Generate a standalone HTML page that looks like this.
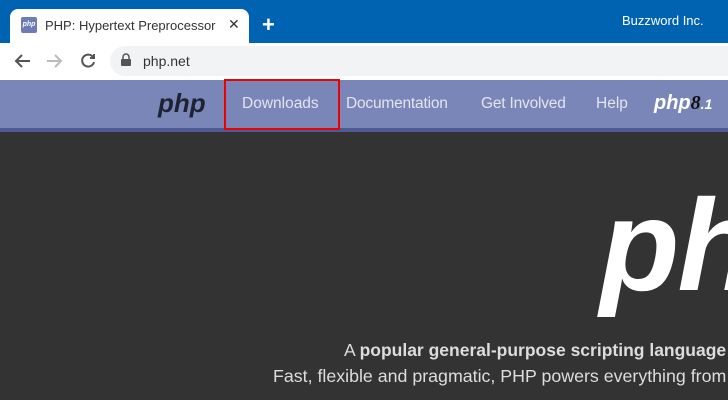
<!DOCTYPE html>
<html><head><style>
*{margin:0;padding:0;box-sizing:border-box}
body{width:728px;height:400px;overflow:hidden;font-family:"Liberation Sans",sans-serif;background:#333;position:relative}
.abs{position:absolute}
</style></head><body>
<div class="abs" style="left:0;top:0;width:728px;height:43px;background:#0063b1"></div>
<div class="abs" style="left:10px;top:9px;width:239px;height:35px;background:#fff;border-radius:8px 8px 0 0"></div>
<div class="abs" style="left:21px;top:17px;width:16px;height:16px;background:#6f7bb5;border-radius:2px;color:#fff;font-size:7px;font-style:italic;font-weight:bold;line-height:16px;text-align:center">php</div>
<div class="abs" style="left:45px;top:18px;font-size:13px;color:#333">PHP: Hypertext Preprocessor</div>
<div class="abs" style="left:228px;top:16px;font-size:14px;color:#333">✕</div>
<div class="abs" style="left:262px;top:12px;font-size:22px;color:#fff;font-weight:bold">+</div>
<div class="abs" style="left:622px;top:13px;font-size:13px;color:#fff">Buzzword Inc.</div>
<div class="abs" style="left:0;top:43px;width:728px;height:37px;background:#fff"></div>
<svg class="abs" style="left:0;top:43px" width="110" height="37"><g fill="none" stroke-width="2"><path d="M30 18H16M22 12l-6 6 6 6" stroke="#555"/><path d="M47 18h14M55 12l6 6-6 6" stroke="#bbb"/><path d="M93 14a6 6 0 1 0 1 5M94 11v4h-4" stroke="#555"/></g></svg>
<div class="abs" style="left:110px;top:46px;width:618px;height:30px;background:#f1f3f4;border-radius:15px 0 0 15px"></div>
<svg class="abs" style="left:120px;top:53px" width="12" height="14"><path d="M3 6V4a3 3 0 0 1 6 0v2" stroke="#555" stroke-width="1.5" fill="none"/><rect x="1" y="6" width="10" height="7" rx="1" fill="#555"/></svg>
<div class="abs" style="left:143px;top:53px;font-size:14px;color:#333">php.net</div>
<div class="abs" style="left:0;top:80px;width:728px;height:48px;background:#7a86b8"></div>
<div class="abs" style="left:0;top:128px;width:728px;height:4px;background:#4f5b93"></div>
<div class="abs" style="left:158px;top:88px;font-size:26px;font-style:italic;font-weight:bold;color:#1f2233">php</div>
<div class="abs" style="left:242px;top:95px;font-size:15.5px;color:#e2e4ef">Downloads</div>
<div class="abs" style="left:346px;top:95px;font-size:15.5px;color:#e2e4ef;letter-spacing:-0.2px">Documentation</div>
<div class="abs" style="left:481px;top:95px;font-size:15.5px;color:#e2e4ef;letter-spacing:-0.2px">Get Involved</div>
<div class="abs" style="left:596px;top:95px;font-size:15.5px;color:#e2e4ef">Help</div>
<div class="abs" style="left:654px;top:92px;font-size:20px;font-style:italic;font-weight:bold;color:#fff">php<span style="color:#111;font-family:'Liberation Serif',serif">8</span><span style="font-size:14px">.1</span></div>
<div class="abs" style="left:224px;top:79px;width:116px;height:51px;border:2px solid #e00"></div>
<div class="abs" style="left:600px;top:180px;font-size:130px;font-style:italic;font-weight:bold;color:#fff;line-height:1;letter-spacing:-2px">php</div>
<div class="abs" style="left:344px;top:340px;font-size:17.5px;color:#ddd;white-space:nowrap">A <b>popular general-purpose scripting language that</b></div>
<div class="abs" style="left:273px;top:366px;font-size:17.8px;color:#ddd;white-space:nowrap">Fast, flexible and pragmatic, PHP powers everything from</div>
</body></html>
